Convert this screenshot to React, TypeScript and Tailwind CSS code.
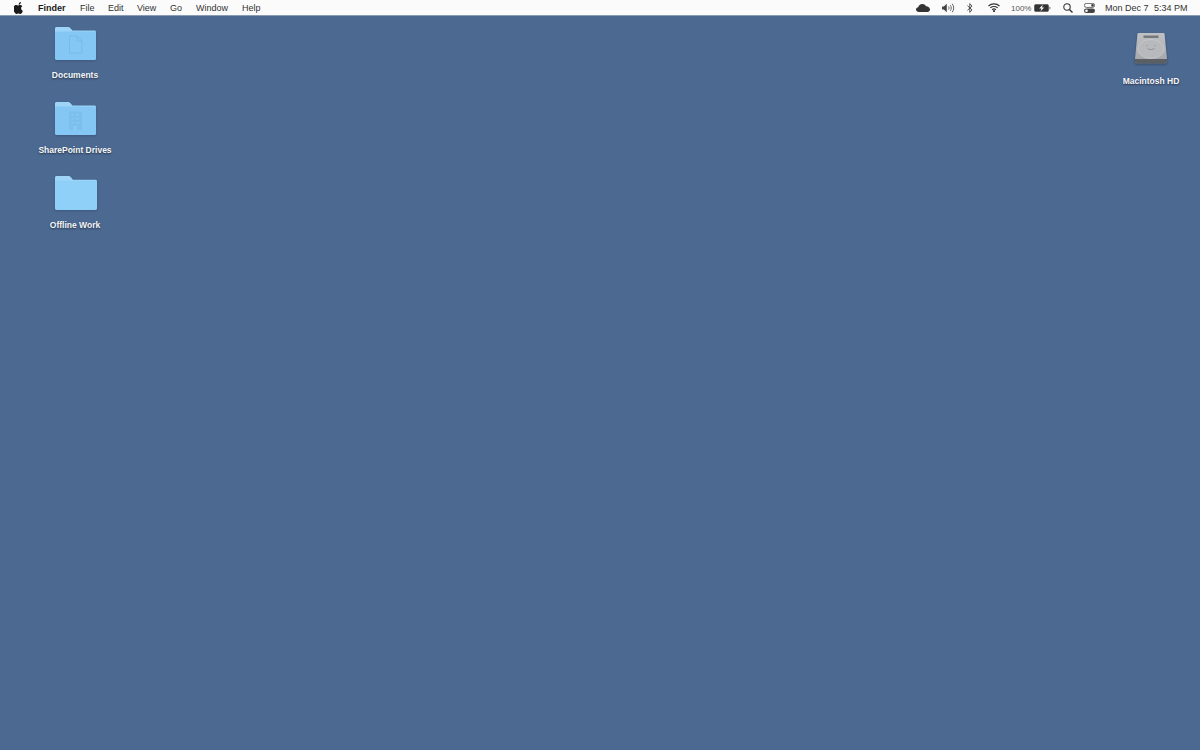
import React from 'react';

const menus = [
  { label: 'File', width: 'w-[28px]' },
  { label: 'Edit', width: 'w-[29px]' },
  { label: 'View', width: 'w-[33px]' },
  { label: 'Go', width: 'w-[26px]' },
  { label: 'Window', width: 'w-[46px]' },
  { label: 'Help', width: 'w-[30px]' },
];

const AppleLogo = () => (
  <svg width="10" height="12" viewBox="0 0 170 200" fill="#1a1a1a">
    <path d="M150 156c-3 7-6 14-10 20-6 8-10 14-14 17-5 5-11 7-17 7-5 0-10-1-17-4-6-3-12-4-17-4-6 0-12 1-18 4-6 3-11 4-15 4-6 0-12-2-18-8-4-3-9-9-15-18-6-9-11-20-15-31-4-12-6-24-6-35 0-13 3-24 8-34 4-7 10-13 17-17 7-4 15-6 23-6 5 0 11 1 19 4 7 3 12 4 14 4 2 0 8-2 16-5 8-3 15-4 21-3 15 1 27 7 35 18-14 8-20 20-20 35 0 11 4 21 12 28 4 4 8 6 12 8-1 3-2 6-5 13zM117 4c0 9-3 18-10 26-8 10-18 15-28 14 0-1 0-2 0-4 0-9 4-18 10-26 3-4 8-7 13-10 5-3 10-4 14-4 1 1 1 3 1 4z" />
  </svg>
);

const Cloud = () => (
  <svg width="14" height="9" viewBox="0 0 14 9" fill="#333">
    <path d="M3 9C1.300 9 0 8 0 6.600 0 5.300 1 4.400 2.200 4.300 2.600 2.500 4.200 1 6.300 1c1.600 0 3 .8 3.700 2.200C12 3.100 14 4.500 14 6.500 14 8 12.900 9 11.300 9z" />
  </svg>
);

const Speaker = () => (
  <svg width="13" height="10" viewBox="0 0 13 10" fill="none" stroke="#555" strokeWidth="0.900">
    <path d="M0 3.400h1.800L4.800 .8v8.400L1.800 6.600H0z" fill="#444" stroke="none" />
    <path d="M6.500 3.500c.7.900.7 2.100 0 3" />
    <path d="M8.300 2.200c1.300 1.600 1.300 4 0 5.600" />
    <path d="M10.200 .8c2 2.500 2 5.900 0 8.400" />
  </svg>
);

const Bluetooth = () => (
  <svg width="6" height="10" viewBox="0 0 6 10" fill="none" stroke="#444" strokeWidth="0.900">
    <path d="M.4 2.600 5 6.900 2.800 9.400V.6L5 3.100.4 7.400" />
  </svg>
);

const Wifi = () => (
  <svg width="12" height="9" viewBox="0 0 12 9" fill="none" stroke="#333" strokeWidth="1.100">
    <path d="M.5 3C3.600.2 8.400.2 11.500 3" />
    <path d="M2.300 4.900c2.100-1.800 5.300-1.800 7.400 0" />
    <path d="M4.100 6.700c1.100-.9 2.700-.9 3.800 0" />
    <circle cx="6" cy="8" r="0.500" fill="#333" />
  </svg>
);

const Battery = () => (
  <svg width="17" height="8" viewBox="0 0 17 8">
    <rect x="0.400" y="0.400" width="14.200" height="7.200" rx="1.600" fill="#333" stroke="#555" strokeWidth="0.700" />
    <rect x="15.200" y="2.700" width="1.200" height="2.600" rx="0.500" fill="#888" />
    <path d="M8.800 .6 5.200 4.400h2.200L6.400 7.400l3.800-4H8z" fill="#f4f4f4" />
  </svg>
);

const Search = () => (
  <svg width="10" height="10" viewBox="0 0 10 10" fill="none" stroke="#333" strokeWidth="1.100">
    <circle cx="4" cy="4" r="3.200" />
    <path d="m6.400 6.400 3.100 3.100" strokeWidth="1.400" />
  </svg>
);

const ControlCenter = () => (
  <svg width="11" height="10" viewBox="0 0 11 10">
    <rect x="0.400" y="0.400" width="10.200" height="4" rx="2" fill="#fff" stroke="#444" strokeWidth="0.800" />
    <circle cx="8.500" cy="2.400" r="1.300" fill="#444" />
    <rect x="0" y="5.400" width="11" height="4.600" rx="2.300" fill="#444" />
    <circle cx="2.500" cy="7.700" r="1.300" fill="#fff" />
  </svg>
);

// glyph sits on top of the folder front, only a shade darker
const Folder = ({ glyph, large }: { glyph?: 'doc' | 'building'; large?: boolean }) => (
  <svg width={large ? 42 : 41} height={large ? 34 : 33} viewBox="0 0 41 33" className="ml-[1px] blur-[0.4px] drop-shadow-[0_1px_1px_rgba(30,50,80,0.3)]">
    <path d="M1.500 0h11.500c1.500 0 2 .6 3 1.700L17.500 3.500H39.500C40.400 3.500 41 4.100 41 5V8H0V1.500C0 .6.600 0 1.500 0z" fill="#9dd4f7" />
    <rect x="0" y="4.500" width="41" height="28.500" rx="1.500" fill={large ? '#8fd0f8' : '#84c7f5'} />
    {glyph === 'doc' && (
      <path d="M14.500 9H22L27 14V26H14.500zM22 9V14H27" fill="none" stroke="#78bbe9" strokeWidth="1" />
    )}
    {glyph === 'building' && (
      <g fill="#7cbfec">
        <path d="M14 9.500h13V28H14z" />
        <g fill="#86c8f4">
          <rect x="16" y="12" width="3" height="1.500" />
          <rect x="21" y="12" width="3" height="1.500" />
          <rect x="16" y="16" width="3" height="1.500" />
          <rect x="21" y="16" width="3" height="1.500" />
          <rect x="16" y="20" width="3" height="1.500" />
          <rect x="21" y="20" width="3" height="1.500" />
          <rect x="18" y="24" width="4" height="4" />
        </g>
      </g>
    )}
  </svg>
);

const HardDrive = () => (
  <svg width="34" height="34" viewBox="0 0 34 34" className="blur-[0.4px] drop-shadow-[0_1px_1px_rgba(20,30,50,0.45)]">
    <defs>
      <linearGradient id="hd" x1="0" y1="0" x2="0" y2="1">
        <stop offset="0" stopColor="#bfc1c5" />
        <stop offset="1" stopColor="#a2a5a9" />
      </linearGradient>
    </defs>
    <path d="M4.500 1h25c.6 0 1 .4 1.100 1L33 27v2.500c0 1-.8 1.800-1.800 1.800H2.800c-1 0-1.800-.8-1.800-1.800V27L3.400 2c.1-.6.500-1 1.100-1z" fill="url(#hd)" />
    <path d="M1 27h32v2.500c0 1-.8 1.800-1.800 1.800H2.800c-1 0-1.800-.8-1.800-1.800z" fill="#5b5e62" />
    <rect x="9.500" y="3.500" width="15" height="2.500" fill="#77797c" />
    <ellipse cx="17" cy="17" rx="13" ry="9.500" fill="#b7b9bc" stroke="#cfd0d3" strokeWidth="0.600" />
    <path d="M13.500 16c1.500 2.200 5.500 2.200 7 0" fill="none" stroke="#888a8e" strokeWidth="0.800" />
    <circle cx="13" cy="13.500" r="0.600" fill="#888a8e" />
    <circle cx="21" cy="13.500" r="0.600" fill="#888a8e" />
  </svg>
);

const DesktopIcon = ({ className, label, children }: { className: string; label: string; children: React.ReactNode }) => (
  <div className={`absolute flex flex-col items-center ${className}`}>
    <div className="mb-[9px] flex h-[34px] items-end justify-center">{children}</div>
    <span className="text-[8.5px] leading-[12px] font-bold whitespace-nowrap text-[#f4f6f9] [text-shadow:0_1px_2px_rgba(0,0,0,0.55)]">
      {label}
    </span>
  </div>
);

export default function App() {
  return (
    <div className="flex h-[750px] w-[1200px] flex-col overflow-hidden bg-[#4c6991] font-['Liberation_Sans',Arial,sans-serif]">
      {/* Menu bar */}
      <div className="flex h-[16px] shrink-0 items-center justify-between border-b border-[#8a9cb5] bg-[#fbfbfb] text-[9px] leading-[15px] text-[#333]">
        <div className="flex items-center">
          <div className="ml-[14px] flex w-[24px]">
            <AppleLogo />
          </div>
          <div className="flex pt-[1px]">
            <span className="w-[42px] font-bold text-[#1a1a1a]">Finder</span>
            {menus.map((m) => (
              <span key={m.label} className={m.width}>{m.label}</span>
            ))}
          </div>
        </div>
        <div className="flex items-center">
          <div className="w-[26px]"><Cloud /></div>
          <div className="w-[25px]"><Speaker /></div>
          <div className="w-[21px]"><Bluetooth /></div>
          <div className="w-[23px]"><Wifi /></div>
          <span className="w-[23px] pt-[1px] text-[8px] text-[#555]">100%</span>
          <div className="w-[29px]"><Battery /></div>
          <div className="w-[21px]"><Search /></div>
          <div className="w-[21px]"><ControlCenter /></div>
          <span className="w-[49px] pt-[1px]">Mon Dec 7</span>
          <span className="mr-[12px] w-[34px] pt-[1px] whitespace-nowrap">5:34 PM</span>
        </div>
      </div>

      {/* Desktop */}
      <div className="relative flex-1">
        <DesktopIcon className="left-[25px] top-[10px] w-[100px]" label="Documents"><Folder glyph="doc" /></DesktopIcon>
        <DesktopIcon className="left-[25px] top-[85px] w-[100px]" label="SharePoint Drives"><Folder glyph="building" /></DesktopIcon>
        <DesktopIcon className="left-[25px] top-[160px] w-[100px]" label="Offline Work"><Folder large /></DesktopIcon>
        <DesktopIcon className="left-[1101px] top-[16px] w-[100px]" label="Macintosh HD"><HardDrive /></DesktopIcon>
      </div>
    </div>
  );
}
